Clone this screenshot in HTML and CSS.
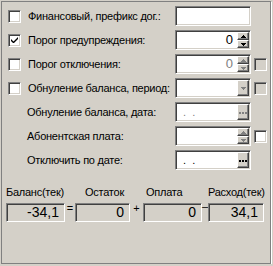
FILE: index.html
```html
<!DOCTYPE html>
<html>
<head>
    <meta charset="UTF-8">
    <title>Баланс абонента</title>
    <link rel="stylesheet" href="styles.css">
</head>
<body>
    <div class="panel">
        <div class="row">
            <span class="check"></span>
            <span class="label">Финансовый, префикс дог.:</span>
            <span class="edit"></span>
            <span class="slot"></span>
        </div>
        <div class="row">
            <span class="check">
                <svg width="11" height="11" viewBox="0 0 11 11"><path d="M2 4v2l2 2h1l4-4V2L4.5 6.5z" fill="#000"/></svg>
            </span>
            <span class="label">Порог предупреждения:</span>
            <span class="edit">
                <span class="value">0</span>
                <span class="spin">
                    <span class="btn"><svg width="5" height="3"><path d="M2 0h1v1h1v1h1v1H0V2h1V1h1z"/></svg></span>
                    <span class="btn"><svg width="5" height="3"><path d="M0 0h5v1H4v1H3v1H2V2H1V1H0z"/></svg></span>
                </span>
            </span>
            <span class="slot"></span>
        </div>
        <div class="row">
            <span class="check"></span>
            <span class="label">Порог отключения:</span>
            <span class="edit disabled">
                <span class="value">0</span>
                <span class="spin">
                    <span class="btn"><svg width="5" height="3"><path d="M2 0h1v1h1v1h1v1H0V2h1V1h1z"/></svg></span>
                    <span class="btn"><svg width="5" height="3"><path d="M0 0h5v1H4v1H3v1H2V2H1V1H0z"/></svg></span>
                </span>
            </span>
            <span class="check side off"></span>
        </div>
        <div class="row">
            <span class="check"></span>
            <span class="label">Обнуление баланса, период:</span>
            <span class="edit disabled">
                <span class="value"></span>
                <span class="btn drop"><svg width="5" height="3"><path d="M0 0h5v1H4v1H3v1H2V2H1V1H0z"/></svg></span>
            </span>
            <span class="check side off"></span>
        </div>
        <div class="row plain">
            <span class="label">Обнуление баланса, дата:</span>
            <span class="edit disabled">
                <span class="date">  .  .</span>
                <span class="btn dots"><span class="dot"></span></span>
            </span>
            <span class="slot"></span>
        </div>
        <div class="row plain">
            <span class="label">Абонентская плата:</span>
            <span class="edit disabled">
                <span class="value"></span>
                <span class="spin">
                    <span class="btn"><svg width="5" height="3"><path d="M2 0h1v1h1v1h1v1H0V2h1V1h1z"/></svg></span>
                    <span class="btn"><svg width="5" height="3"><path d="M0 0h5v1H4v1H3v1H2V2H1V1H0z"/></svg></span>
                </span>
            </span>
            <span class="check side"></span>
        </div>
        <div class="row plain">
            <span class="label">Отключить по дате:</span>
            <span class="edit">
                <span class="date">  .  .</span>
                <span class="btn dots"><span class="dot"></span></span>
            </span>
            <span class="slot"></span>
        </div>

        <div class="totals">
            <span class="cap col1">Баланс(тек)</span>
            <span class="cap col3 rest">Остаток</span>
            <span class="cap col5 paid">Оплата</span>
            <span class="cap col7">Расход(тек)</span>
            <span class="box col1">-34,1</span>
            <span class="sign col2">=</span>
            <span class="box col3">0</span>
            <span class="sign col4">+</span>
            <span class="box col5">0</span>
            <span class="sign col6 minus">–</span>
            <span class="box col7">34,1</span>
        </div>
    </div>
</body>
</html>
```

FILE: styles.css
```css
body {
    margin: 0;
    background-color: #d4d0c8;
    font-family: "Liberation Sans", Arial, sans-serif;
    font-size: 11px;
    color: #000;
}

.panel {
    box-sizing: border-box;
    width: 270px;
    height: 263px;
    margin: 1px 0 0 1px;
    padding-top: 4px;
    border: 1px solid #808080;
    box-shadow: 1px 1px 0 #fff;
}

.row {
    display: flex;
    align-items: center;
    height: 20px;
    margin-bottom: 4px;
    padding-left: 6px;
}

.row.plain {
    padding-left: 25px;
}

.label,
.cap {
    letter-spacing: -0.25px;
    white-space: nowrap;
}

.label {
    flex: 1;
}

/* sunken 3d frame, as used by checkboxes and edits */
.check,
.edit,
.box {
    box-sizing: border-box;
    border: 1px solid;
    border-color: #808080 #fff #fff #808080;
    box-shadow: inset 1px 1px #404040, inset -1px -1px #d4d0c8;
}

.check {
    flex: none;
    display: flex;
    align-items: center;
    justify-content: center;
    width: 13px;
    height: 13px;
    margin-right: 7px;
    background-color: #fff;
}

.check svg {
    display: block;
}

.check.side {
    margin: 0 3px;
}

.check.off {
    background-color: #d4d0c8;
}

.slot {
    flex: none;
    width: 13px;
    margin: 0 3px;
}

.edit {
    flex: none;
    display: flex;
    width: 76px;
    height: 20px;
    padding: 1px;
    background-color: #fff;
}

.value {
    flex: 1;
    padding-right: 4px;
    font-size: 13px;
    line-height: 16px;
    text-align: right;
}

.date {
    flex: 1;
    white-space: pre;
    line-height: 16px;
}

.edit.disabled .value,
.edit.disabled .date {
    color: #808080;
}

.spin {
    display: flex;
    flex-direction: column;
    width: 12px;
}

.btn {
    box-sizing: border-box;
    display: flex;
    align-items: center;
    justify-content: center;
    background-color: #d4d0c8;
    border: 1px solid;
    border-color: #fff #404040 #404040 #fff;
    box-shadow: inset -1px -1px #808080;
}

.btn svg {
    display: block;
    fill: #000;
}

.edit.disabled .btn svg {
    fill: #808080;
}

.spin .btn {
    height: 8px;
}

.drop,
.dots {
    width: 12px;
    height: 16px;
}

.dot {
    width: 2px;
    height: 2px;
    margin: 2px 6px 0 0;
    background-color: #000;
    box-shadow: 3px 0 #000, 6px 0 #000;
}

.edit.disabled .dot {
    background-color: #808080;
    box-shadow: 3px 0 #808080, 6px 0 #808080;
}

.totals {
    display: grid;
    grid-template-columns: 59px 10px 55px 13px 59px 6px 56px;
    grid-template-rows: 13px 19px;
    row-gap: 4px;
    margin: 16px 0 0 4px;
}

.cap {
    grid-row: 1;
    line-height: 13px;
}

.cap.rest {
    padding-left: 10px;
}

.cap.paid {
    padding-left: 3px;
}

.box {
    grid-row: 2;
    padding-right: 5px;
    font-size: 14px;
    line-height: 17px;
    text-align: right;
}

.sign {
    grid-row: 2;
    line-height: 10px;
    text-align: center;
}

.sign.minus {
    line-height: 6px;
}

.col1 { grid-column: 1; }
.col2 { grid-column: 2; }
.col3 { grid-column: 3; }
.col4 { grid-column: 4; }
.col5 { grid-column: 5; }
.col6 { grid-column: 6; }
.col7 { grid-column: 7; }
```
